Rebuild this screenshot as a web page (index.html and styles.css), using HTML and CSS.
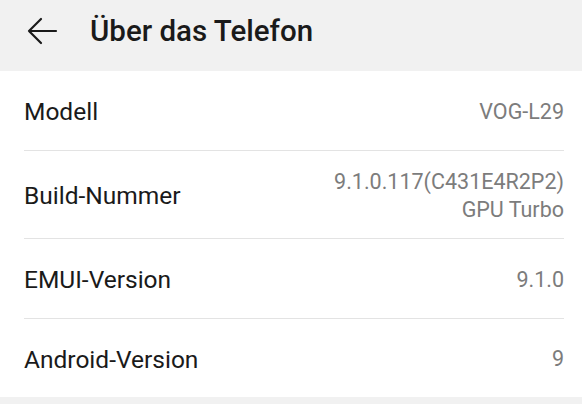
FILE: index.html
```html
<!DOCTYPE html>
<html lang="de">
<head>
    <meta charset="UTF-8">
    <meta name="viewport" content="width=device-width, initial-scale=1.0">
    <title>Über das Telefon</title>
    <link rel="stylesheet" href="styles.css">
</head>
<body>
    <div class="header">
        <button class="back-button" aria-label="Zurück">
            <svg width="32" height="28" viewBox="0 0 32 28">
                <path d="M30 14H3M15 2L3 14l12 12" fill="none" stroke="#1a1a1a" stroke-width="2.2" stroke-linecap="round" stroke-linejoin="round"/>
            </svg>
        </button>
        <h1>Über das Telefon</h1>
    </div>

    <div class="list">
        <div class="row">
            <span class="label">Modell</span>
            <span class="value">VOG-L29</span>
        </div>
        <div class="row row-tall">
            <span class="label">Build-Nummer</span>
            <span class="value">9.1.0.117(C431E4R2P2)<br>GPU Turbo</span>
        </div>
        <div class="row">
            <span class="label">EMUI-Version</span>
            <span class="value">9.1.0</span>
        </div>
        <div class="row">
            <span class="label">Android-Version</span>
            <span class="value">9</span>
        </div>
    </div>
</body>
</html>
```

FILE: styles.css
```css
body {
    margin: 0;
    background-color: #f1f1f1;
    font-family: Roboto, 'Noto Sans', sans-serif;
}

.header {
    display: flex;
    align-items: center;
    height: 71px;
    padding-left: 26px;
    background-color: #f1f1f1;
}

.back-button {
    background: none;
    border: none;
    padding: 0;
    margin-top: -10px;
    width: 32px;
    height: 28px;
    cursor: pointer;
}

.header h1 {
    margin: -10px 0 0 32px;
    font-size: 29.5px;
    font-weight: 500;
    color: #1a1a1a;
}

.list {
    background-color: #ffffff;
    padding: 0 18px 0 24px;
}

.row {
    display: flex;
    justify-content: space-between;
    align-items: center;
    height: 79px;
    border-bottom: 1px solid #e3e3e3;
}

.row:last-child {
    border-bottom: none;
    height: 78px;
}

.row-tall {
    height: 87px;
}

.label {
    font-size: 24.5px;
    color: #1a1a1a;
    margin-top: 2px;
}

.value {
    font-size: 21.5px;
    color: #7c7c7c;
    text-align: right;
    line-height: 28px;
    margin-top: 2px;
}
```
